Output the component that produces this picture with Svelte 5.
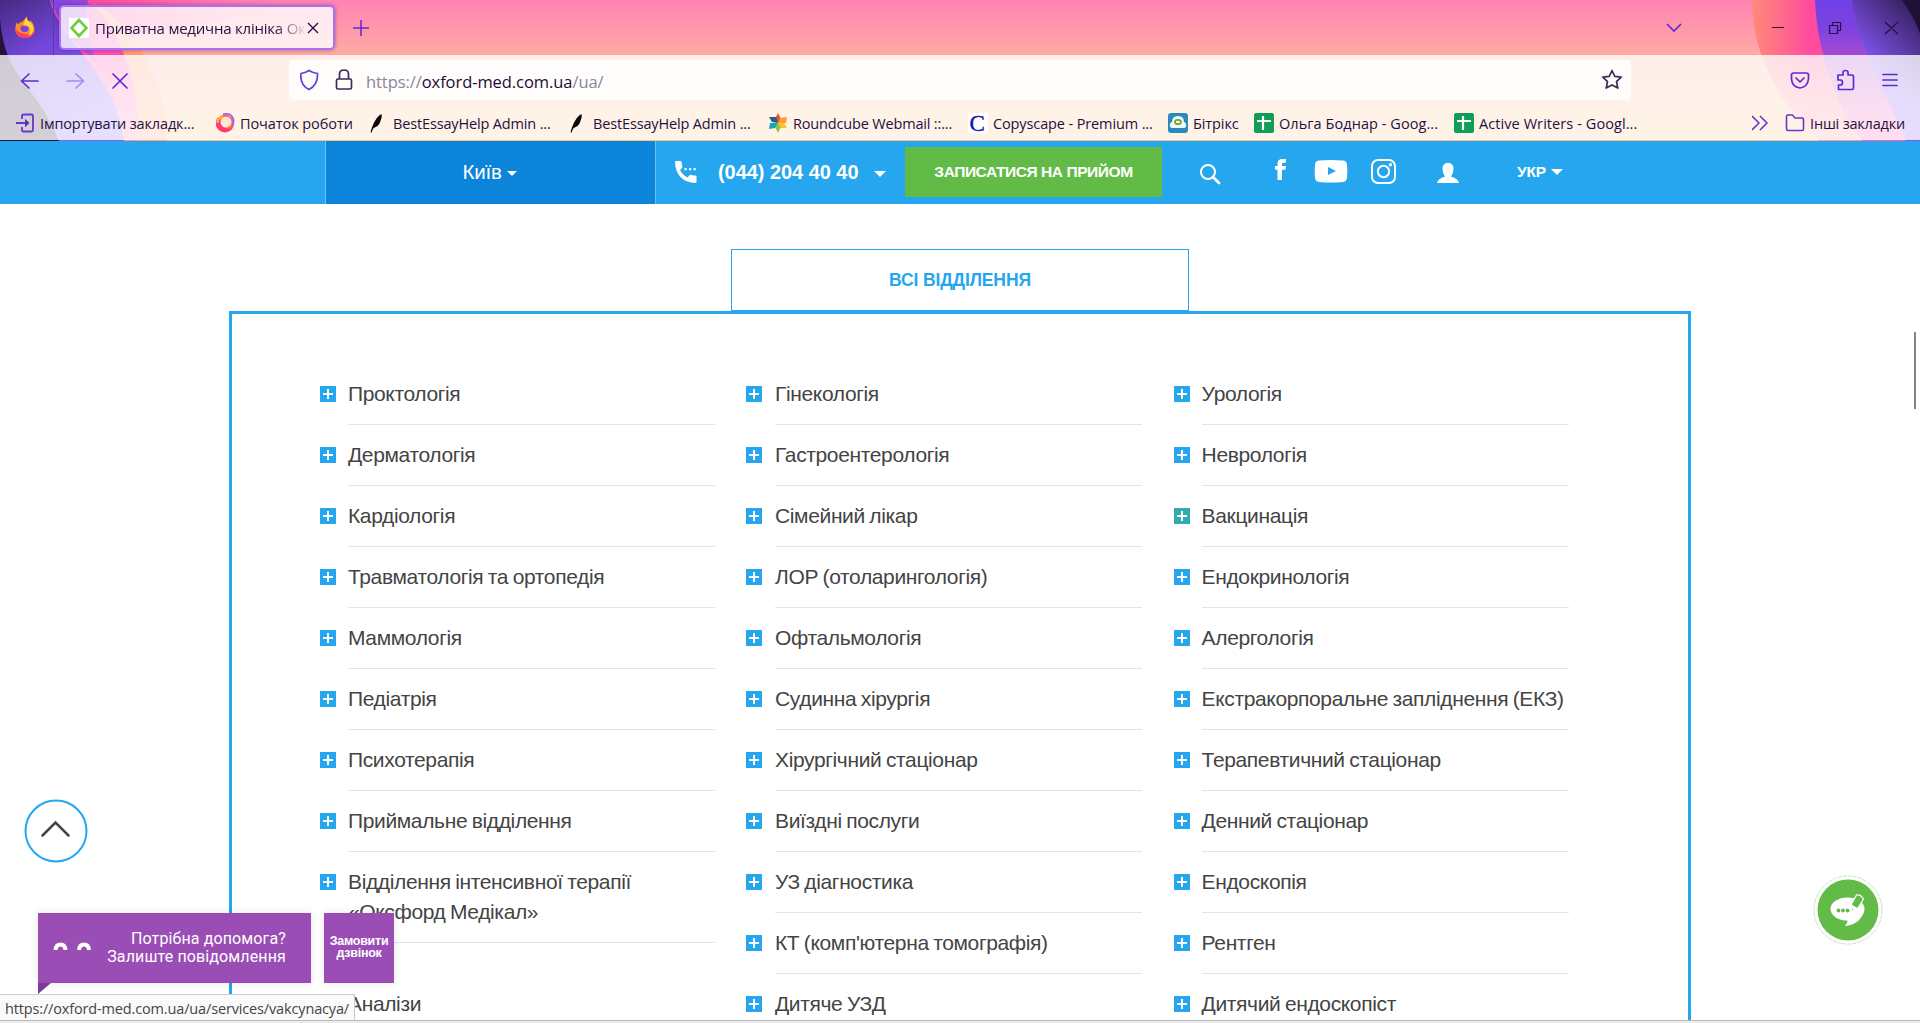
<script>
  // slot: full width of the bookmark, gap: icon to label, track: label tracking
  const bookmarks = [
    { label: 'Імпортувати закладк...', icon: 'import', slot: 199, gap: 4, track: -0.15 },
    { label: 'Початок роботи', icon: 'fox', slot: 153, gap: 5, track: -0.08 },
    { label: 'BestEssayHelp Admin ...', icon: 'feather', slot: 200, gap: 5, track: -0.15 },
    { label: 'BestEssayHelp Admin ...', icon: 'feather', slot: 200, gap: 5, track: -0.15 },
    { label: 'Roundcube Webmail ::...', icon: 'cube', slot: 200, gap: 5, track: -0.17 },
    { label: 'Copyscape - Premium ...', icon: 'copy', slot: 200, gap: 5, track: -0.12 },
    { label: 'Бітрікс', icon: 'bitrix', slot: 86, gap: 5, track: -0.1 },
    { label: 'Ольга Боднар - Goog...', icon: 'sheet', slot: 200, gap: 5, track: 0.06 },
    { label: 'Active Writers - Googl...', icon: 'sheet', slot: 200, gap: 5, track: 0.08 }
  ];
  const columns = [
    ['Проктологія', 'Дерматологія', 'Кардіологія', 'Травматологія та ортопедія', 'Маммологія', 'Педіатрія', 'Психотерапія', 'Приймальне відділення', 'Відділення інтенсивної терапії «Оксфорд Медікал»', 'Аналізи'],
    ['Гінекологія', 'Гастроентерологія', 'Сімейний лікар', 'ЛОР (отоларингологія)', 'Офтальмологія', 'Судинна хірургія', 'Хірургічний стаціонар', 'Виїздні послуги', 'УЗ діагностика', "КТ (комп'ютерна томографія)", 'Дитяче УЗД'],
    ['Урологія', 'Неврологія', 'Вакцинація', 'Ендокринологія', 'Алергологія', 'Екстракорпоральне запліднення (ЕКЗ)', 'Терапевтичний стаціонар', 'Денний стаціонар', 'Ендоскопія', 'Рентген', 'Дитячий ендоскопіст']
  ];
  const hovered = 'Вакцинація';
</script>

<div class="screen">
  <header class="browser">
    <svg class="theme" width="1920" height="141" viewBox="0 0 1920 141" aria-hidden="true">
      <defs>
        <linearGradient id="sky" x1="0" y1="0" x2="0" y2="1"><stop offset="0" stop-color="#ff84b4" /><stop offset=".39" stop-color="#ffaaa2" /><stop offset=".8" stop-color="#ffc08c" /></linearGradient>
        <linearGradient id="vio" x1="0" y1="0" x2=".5" y2="1"><stop offset="0" stop-color="#452a80" /><stop offset=".4" stop-color="#7446dc" /><stop offset="1" stop-color="#8a62f8" /></linearGradient>
        <linearGradient id="haze" gradientUnits="userSpaceOnUse" x1="50" y1="0" x2="90" y2="45"><stop offset="0" stop-color="#7d45e2" /><stop offset="1" stop-color="#c050cc" /></linearGradient>
        <linearGradient id="magenta" gradientUnits="userSpaceOnUse" x1="70" y1="0" x2="300" y2="0"><stop offset="0" stop-color="#ff46a4" /><stop offset=".3" stop-color="#ff5aa4" /><stop offset="1" stop-color="#ff84b0" stop-opacity="0" /></linearGradient>
        <linearGradient id="rose" x1="0" y1="0" x2="0" y2="1"><stop offset="0" stop-color="#ff4aa6" /><stop offset=".45" stop-color="#ff50b4" /><stop offset=".8" stop-color="#ff78b8" /><stop offset="1" stop-color="#ff90a0" /></linearGradient>
        <linearGradient id="orangeR" x1="0" y1="0" x2="1" y2="0"><stop offset="0" stop-color="#ff8a78" /><stop offset=".35" stop-color="#ff4b9e" /></linearGradient>
        <linearGradient id="orangeFade" x1="0" y1="0" x2="0" y2="1"><stop offset=".35" stop-color="#ffa080" stop-opacity="0" /><stop offset="1" stop-color="#ff9a90" /></linearGradient>
        <linearGradient id="vioR" x1="0" y1="0" x2="0" y2="1"><stop offset="0" stop-color="#6f40e8" /><stop offset=".2" stop-color="#7d42e0" /><stop offset=".39" stop-color="#a44bd4" /><stop offset=".9" stop-color="#ff62b0" /></linearGradient>
        <linearGradient id="darkR" gradientUnits="userSpaceOnUse" x1="1915" y1="10" x2="1865" y2="60"><stop offset="0" stop-color="#37215f" /><stop offset="1" stop-color="#8355f4" /></linearGradient>
      </defs>
      <rect width="1920" height="141" fill="url(#sky)" />
      <path d="M60 0H320C270 12 200 25 136 34L110 60Z" fill="url(#magenta)" />
      <path d="M88 0C130 20 166 75 167 141H100Z" fill="#ff9a72" opacity=".85" />
      <path d="M50 0H90C112 20 142 75 137 141H90Z" fill="url(#rose)" />
      <path d="M50 0H88Q84 24 96 62L88 55Q62 30 50 0Z" fill="url(#haze)" />
      <path d="M0 0H50C60 42 116 72 124 141H0Z" fill="url(#vio)" />
      <path d="M0 18C5 82 36 82 59 141H0Z" fill="#251238" />
      <path d="M1752 0C1752 50 1775 100 1820 141H1920V0Z" fill="url(#orangeR)" />
      <path d="M1752 0C1752 50 1775 100 1820 141H1920V0Z" fill="url(#orangeFade)" />
      <path d="M1815 0C1817 50 1835 105 1862 141H1920V0Z" fill="url(#vioR)" />
      <path d="M1852 0C1858 50 1890 100 1906 141H1920V0Z" fill="url(#darkR)" />
      <path d="M1902 0Q1915 18 1920 34V0Z" fill="#1f1038" />
    </svg>
    <div class="tabs">
      <div class="fx"><svg width="22" height="24" viewBox="0 0 22 24"><path d="M2.500 6.500 4 8q2-2 4.500-2.500Q11 3 12.500.5 12.500 4 16 6l.5-1.500Q21 9 20.500 14.500 19.500 21.500 11 22 2 21.500 1.300 14 1.200 10 2.500 6.500Z" fill="#ff8a26" /><path d="M1.300 13Q2 21.500 11 22q7-.3 9.300-6Q16 19 11 18 4 17 1.300 13Z" fill="#ff3d62" /><path d="M12.500.5Q12.500 4 16 6q4.500 4 3 9-1 4-5 5 4-5 1-9-3-2-6-2.500Q11 5 12.500.5Z" fill="#ffd53d" /><path d="M7.500 9.500q3 1 5.500.5 2.500 2 1 4.500-2 2.500-5.500 1-3.500-1.500-1-6Z" fill="#7542e5" /></svg></div>
      <div class="tab">
        <svg width="20" height="20" viewBox="0 0 20 20"><rect width="20" height="20" fill="#fff" /><path d="M10 2 17.500 10 10 18 2.500 10Z" fill="none" stroke="#6fce3c" stroke-width="2.600" /></svg>
        <span class="tabtext">Приватна медична клініка Окс</span>
        <svg width="12" height="12" viewBox="0 0 12 12"><path d="M1 1 11 11M11 1 1 11" stroke="#251040" stroke-width="1.400" /></svg>
      </div>
      <svg class="newtab" width="16" height="16" viewBox="0 0 16 16"><path d="M8 0V16M0 8H16" stroke="#5b2bd0" stroke-width="1.500" /></svg>
      <svg class="win" width="280" height="30" viewBox="1640 12 280 30" fill="none" stroke="#251040" stroke-width="1.200"><path d="m1667 23 7 7 7-7" stroke="#5b2bd0" stroke-width="1.600" /><path d="M1772 26.500h12M1829.500 24.500h8v8h-8zM1832.500 24v-2.500h8v8H1838M1885 21l13 12M1898 21l-13 12" /></svg>
    </div>
    <div class="nav">
      <svg class="arrows" width="289" height="40" viewBox="0 60 289 40" fill="none" stroke="#5b2bd0" stroke-width="1.700" stroke-linecap="round" stroke-linejoin="round"><path d="M38 81H22M29 74l-7.500 7 7.500 7" /><path d="M67 81H83M76 74l7.500 7-7.500 7" opacity=".45" /><path d="m113 74 14 14M127 74l-14 14" /></svg>
      <div class="url">
        <svg width="60" height="24" viewBox="0 0 60 24" fill="none" stroke-width="1.700"><path d="M9 2.500Q13 5 17.500 5.500C18 14 14 19 9 21.500 4 19 0 14 1 5.500Q5 5 9 2.500Z" stroke="#5545d8" /><path d="M38 11h12q1.500 0 1.500 1.500v7q0 1.500-1.500 1.500h-12q-1.500 0-1.500-1.500v-7q0-1.500 1.500-1.500ZM39.500 11V6q0-4 4.500-4T48.500 6v5" stroke="#3c2c58" /></svg>
        <span class="addr">https://<b>oxford-med.com.ua</b>/ua/</span>
        <svg class="star" width="22" height="22" viewBox="0 0 22 22"><path d="m11 1.500 2.800 5.900 6.400.8-4.700 4.400 1.300 6.500L11 15.900l-5.800 3.200 1.300-6.500L1.800 8.200l6.400-.8Z" fill="none" stroke="#3c2c58" stroke-width="1.700" stroke-linejoin="round" /></svg>
      </div>
      <svg class="tools" width="120" height="30" viewBox="1785 65 120 30" fill="none" stroke="#5b2bd0" stroke-width="1.700" stroke-linejoin="round" stroke-linecap="round"><path d="M1793.500 73h13q2 0 2 2v4q-1 8-8.500 9-8-1-8.500-9v-4q0-2 2-2ZM1796 78l4 4 4-4" /><path d="M1838 75h5v-2.500q0-2 2.500-2t2.500 2V75h4q1.500 0 1.500 1.500V88q0 1.500-1.500 1.500h-13.500V85h2q2 0 2-2.500t-2-2.500h-2.500Z" /><path d="M1883 74.500h14M1883 80h14M1883 85.500h14" /></svg>
    </div>
    <div class="bookmarks">
      {#each bookmarks as b}
        <div class="bm" style="width:{b.slot}px;gap:{b.gap}px;letter-spacing:{b.track}px">
          <svg width="20" height="20" viewBox="0 0 20 20">
            {#if b.icon === 'import'}<path d="M6 6V3q0-1.500 1.500-1.500h8Q17 1.500 17 3v14q0 1.500-1.500 1.500h-8Q6 18.500 6 17v-3M0 10h10" fill="none" stroke="#6a35c8" stroke-width="1.800" /><path d="M9 5.800 13.500 10 9 14.200Z" fill="#5b2bc8" />
            {:else if b.icon === 'fox'}<circle cx="10" cy="10.500" r="9" fill="#ff6644" /><path d="M2 5q-3 8 2 12c5 4 12 2 14-3-5 4-13 0-11-6Z" fill="#ff3c75" /><circle cx="11" cy="9" r="5.500" fill="#ffe6d2" /><path d="M8 1.200Q17-.5 18.500 7q.3 3-1 6" fill="none" stroke="#a45cff" stroke-width="1.800" /><path d="M8 3.500Q3 4 2.500 10" fill="none" stroke="#ffb03c" stroke-width="2.500" />
            {:else if b.icon === 'feather'}<path d="M2.500 19.500C5 10 9 3 13.500 1q1 3-1 7c-1 4-4 6-7 7l-2 4.500Z" fill="#080808" />
            {:else if b.icon === 'cube'}<path d="M10 0 13 6 10 10 7 6Z" fill="#f04a28" /><path d="m19 4-1 6-8 0 2-5Z" fill="#ff9a30" /><path d="m19 15-7 0-2-5 6 0Z" fill="#fbc52d" /><path d="m10 20-3-6 3-4 3 4Z" fill="#9bc34a" /><path d="m1 16 1-6 8 0-3 5Z" fill="#19a5b8" /><path d="m1 4 7 0 2 6-6-1Z" fill="#1c6584" />
            {:else if b.icon === 'copy'}<rect width="20" height="20" fill="#fff" /><text x="1.500" y="17.500" class="copyc">C</text>
            {:else if b.icon === 'bitrix'}<rect width="20" height="20" rx="3" fill="#2d89ba" /><path d="M4 15q-3-1-2-4 0-2 2-2 0-6 6-6t6 6q3 1 2 4 0 2-3 2Z" fill="#eef9ff" /><ellipse cx="10" cy="9" rx="3" ry="2.200" fill="#fff" stroke="#6da925" stroke-width="1.800" />
            {:else}<rect width="20" height="20" rx="2" fill="#109d58" /><path d="M9 3v14M3 8h14" stroke="#fff" stroke-width="2.200" />{/if}
          </svg>
          <span>{b.label}</span>
        </div>
      {/each}
      <div class="other">
        <svg width="54" height="20" viewBox="0 0 54 20" fill="none" stroke="#6a35c8" stroke-width="1.600" stroke-linejoin="round"><path d="m0 3 7 7-7 7M8 3l7 7-7 7M36 2h4.500l2.500 3h7q1.500 0 1.500 1.500V16q0 1.500-1.500 1.500h-14Q34.500 17.500 34.500 16V3.500Q34.500 2 36 2Z" /></svg>
        <span>Інші закладки</span>
      </div>
    </div>
  </header>

  <div class="sitebar">
    <div class="city">Київ <i class="caret small"></i></div>
    <div class="phone">
      <svg width="22" height="22" viewBox="0 0 22 22" fill="#fff"><path d="M1 0H5.500Q6.300 0 6.500 1q0 2.500 1 4.500.2.800-.3 1.200L5 9q2.500 5 7.500 7.500l2.300-2.500q.7-.6 1.400-.3 2 .8 4.300.9 1 .2 1 1V21q0 1-1 1Q1 21 0 1 0 0 1 0ZM9.500 7h2.200v2.200H9.500ZM14 7h2.200v2.200H14ZM18.500 7h2.200v2.200h-2.200Z" /></svg>
      <span>(044) 204 40 40</span><i class="caret"></i>
    </div>
    <div class="book">ЗАПИСАТИСЯ НА ПРИЙОМ</div>
    <svg class="social" width="270" height="40" viewBox="1195 152 270 40" fill="#fff">
      <circle cx="1208" cy="173" r="7" fill="none" stroke="#fff" stroke-width="2" /><path d="m1213 178 6 6" stroke="#fff" stroke-width="2.800" stroke-linecap="round" />
      <path d="M1277.500 181v-10.200H1275V167h2.500v-2.200q0-4.800 4.800-4.800h3.700v3.800h-2.500q-1.500 0-1.500 1.500v1.700h4l-.5 3.800H1282V181Z" />
      <path d="M1319 161.500q12-1 24 0 3.500.3 4 4 .7 6.500 0 13-.4 4-4 4.500-12 1-24 0-3.600-.5-4-4.500-.7-6.500 0-13 .5-3.700 4-4ZM1328 168v8l8-4Z" fill-rule="evenodd" />
      <g fill="none" stroke="#fff" stroke-width="2"><rect x="1372" y="161" width="23" height="23" rx="6" /><circle cx="1383.500" cy="172.500" r="5.700" /></g><circle cx="1390.500" cy="165.700" r="1.700" />
      <path d="M1437 184q.7-4.500 8-6.500-2.500-3.500-2.500-8 0-5.500 5.500-5.500t5.500 5.500q0 4.500-2.500 8 7.300 2 8 6.500Z" />
    </svg>
    <div class="lang">УКР <i class="caret"></i></div>
  </div>

  <main>
    <div class="all">ВСІ ВІДДІЛЕННЯ</div>
    <section class="panel">
      {#each columns as col}
        <ul>
          {#each col as item}
            <li><span class="plus" class:hot={item === hovered}></span><span class="name">{item}</span></li>
          {/each}
        </ul>
      {/each}
    </section>
  </main>
  <div class="scroll"></div>
  <svg class="up" width="64" height="64" viewBox="0 0 64 64" fill="none"><circle cx="32" cy="32" r="30.500" fill="#fff" stroke="#25a6ee" stroke-width="2" /><path d="m18.500 36.500 13-13 13 13" stroke="#444" stroke-width="2.500" stroke-linecap="round" /></svg>
  <div class="help">
    <svg width="40" height="8" viewBox="0 0 40 8" fill="none" stroke="#fff" stroke-width="4"><path d="M3.500 8Q4 2.500 8.500 2.500T13.500 8M27 8q.5-5.500 5-5.500T37 8" /></svg>
    <div>Потрібна допомога?<br />Залиште повідомлення</div>
  </div>
  <div class="call">Замовити<br />дзвінок</div>
  <svg class="chat" width="70" height="70" viewBox="0 0 70 70"><circle cx="35" cy="35" r="34" fill="#fff" stroke="#c4e6bd" stroke-width="1" stroke-dasharray="4 1" /><circle cx="35" cy="35" r="30.500" fill="#62bb47" /><ellipse cx="34.500" cy="34" rx="17" ry="11.500" fill="#fff" /><path d="M51 37Q46 50 32 51q3-3 2.500-6Z" fill="#fff" /><g fill="#62bb47"><circle cx="25.500" cy="35.500" r="1.900" /><circle cx="30" cy="35.500" r="1.900" /><circle cx="34.500" cy="35.500" r="1.900" /></g><path d="m38.500 29 5-9q4-1 7 4l-5.500 9-6.500 3Z" fill="#62bb47" stroke="#fff" stroke-width="1.200" /><path d="m38.500 29.500 6 3.500-3.500 2-2.500-2Z" fill="#fff" /></svg>
  <div class="status">https://oxford-med.com.ua/ua/services/vakcynacya/</div>
  <div class="bottom"></div>
</div>

<style>
  :global(body) { margin: 0; overflow: hidden; }
  .screen { position: relative; width: 1920px; height: 1023px; overflow: hidden; background: #fff; font-family: "Liberation Sans", Arial, sans-serif; white-space: nowrap; }
  .screen * { box-sizing: border-box; }
  svg { flex: none; display: block; }
  .browser { position: relative; height: 141px; border-bottom: 1px solid #b98f88; font-family: "Open Sans", "Noto Sans", sans-serif; color: #251040; }
  .theme { position: absolute; inset: 0; }
  .tabs { position: relative; height: 55px; display: flex; align-items: center; }
  .fx { width: 54px; height: 55px; padding: 16px 0 0 14px; border-right: 1px solid #5a35b0; }
  .tab { width: 276px; height: 45px; margin-left: 5px; border: 2px solid #a871f5; border-radius: 5px; background: rgba(255,255,255,.8); box-shadow: 0 0 4px rgba(60,0,80,.4); display: flex; align-items: center; padding: 0 11px 0 8px; }
  .tabtext { width: 212px; margin-left: 6px; overflow: hidden; font-size: 15px; letter-spacing: -.22px; mask-image: linear-gradient(90deg, #000 85%, transparent); }
  .newtab { margin-left: 18px; }
  .win { margin-left: auto; }
  .nav { position: relative; height: 49px; padding-top: 5px; display: flex; background: linear-gradient(rgba(255,255,255,.78), rgba(255,255,255,.8)); }
  .url { width: 1342px; height: 40px; border-radius: 5px; background: rgba(255,255,255,.85); display: flex; align-items: center; padding: 0 8px 0 11px; }
  .addr { margin-left: 6px; padding-top: 2px; font-size: 16.500px; color: #8a8497; letter-spacing: -.07px; }
  .addr b { font-weight: 400; color: #1c0b33; }
  .star { margin-left: auto; }
  .tools { margin: 5px 0 0 154px; }
  .bookmarks { position: relative; height: 36px; display: flex; align-items: center; padding: 2px 0 0 16px; background: rgba(255,255,255,.8); font-size: 14.500px; letter-spacing: -.2px; }
  .bm { flex: none; display: flex; align-items: center; }
  .copyc { font: 23px "Liberation Serif", serif; fill: #1818a0; stroke: #1818a0; stroke-width: .4; }
  .other { margin-left: auto; margin-right: 15px; display: flex; align-items: center; gap: 4px; }
  .sitebar { height: 63px; background: #25a6ee; color: #fff; display: flex; align-items: center; padding-left: 325px; }
  .city { width: 331px; height: 63px; background: #0b84da; border: solid #68c1f4; border-width: 0 1px; display: flex; align-items: center; justify-content: center; gap: 5px; padding: 0 2px 2px 0; font-size: 20.500px; letter-spacing: -.2px; }
  .caret { border: 6px solid transparent; border-top-color: #fff; border-bottom: 0; margin-top: 3px; }
  .small { border-width: 5px 5px 0; }
  .phone { width: 249px; display: flex; align-items: center; padding-left: 19px; padding-bottom: 1px; font-size: 20px; letter-spacing: -.05px; font-weight: 700; }
  .phone span { margin: 0 16px 0 21px; }
  .book { width: 257px; height: 50px; margin-bottom: 1px; background: #62bb47; display: flex; align-items: center; justify-content: center; font-size: 15.500px; font-weight: 700; letter-spacing: -.43px; }
  .social { margin-left: 33px; margin-bottom: 3px; }
  .lang { margin-left: 52px; margin-bottom: 1px; display: flex; align-items: center; gap: 5px; font-size: 15.500px; letter-spacing: -.2px; font-weight: 700; }
  .lang .caret { margin-top: 0; }
  main { padding: 45px 229px 0; height: 816px; display: flex; flex-direction: column; align-items: center; }
  .all { flex: none; width: 458px; height: 62px; border: 1px solid #25a6ee; display: flex; align-items: center; justify-content: center; color: #25a6ee; font-size: 17.500px; font-weight: 700; letter-spacing: -.12px; }
  .panel { width: 1462px; flex: 1; border: 3px solid #25a6ee; border-bottom: 0; padding: 50px 0 0 88px; display: flex; gap: 31px; overflow: hidden; }
  ul { list-style: none; margin: 0; padding: 0; width: 395px; flex: none; }
  ul:nth-child(2) { width: 396.600px; }
  li { display: flex; gap: 12px; min-height: 61px; }
  ul:nth-child(2) li { gap: 13px; }
  ul:first-child li:last-child { margin-top: 31px; }
  .plus { flex: none; width: 16px; height: 16px; margin-top: 22px; background: linear-gradient(#fff,#fff) center/10px 2px no-repeat, linear-gradient(#fff,#fff) center/2px 10px no-repeat, #25a6ee; }
  .plus.hot { background-color: #35a9b0; }
  .name { width: 367px; padding: 15px 60px 15px 0; border-bottom: 1px solid #e5e5e5; color: #444; font-size: 21px; line-height: 30px; letter-spacing: -.36px; word-spacing: -1px; white-space: normal; }
  ul:not(:first-child) .name { white-space: nowrap; padding-right: 0; }
  .scroll { position: absolute; left: 1914px; top: 332px; width: 2px; height: 77px; background: #858585; }
  .up { position: absolute; left: 24px; top: 799px; }
  .help { position: absolute; left: 38px; top: 913px; width: 273px; height: 70px; background: #9a4db5; color: #fff; display: flex; align-items: center; justify-content: space-between; padding: 0 25px 0 14px; text-align: right; font: 16px/18px Roboto, sans-serif; letter-spacing: .13px; box-shadow: 0 0 8px rgba(0,0,0,.1); }
  .help svg { margin-bottom: 5px; }
  .help::after { content: ""; position: absolute; left: 0; top: 70px; width: 13px; height: 11px; background: #7e3b98; clip-path: polygon(0 0, 100% 0, 0 100%); }
  .call { position: absolute; left: 324px; top: 913px; width: 70px; height: 70px; background: #9a4db5; color: #fff; display: flex; align-items: center; justify-content: center; padding-bottom: 2px; text-align: center; font-size: 12.500px; font-weight: 700; letter-spacing: -.25px; line-height: 12px; box-shadow: 0 0 8px rgba(0,0,0,.1); }
  .chat { position: absolute; left: 1813px; top: 875px; }
  .status { position: absolute; left: 0; top: 994px; width: 355px; height: 26px; background: #fafafa; border: solid #ccc; border-width: 1px 1px 0 0; padding-left: 5px; color: #444; font: 14.500px/27px "Open Sans", sans-serif; letter-spacing: -.15px; }
  .bottom { position: absolute; left: 0; top: 1020px; width: 100%; height: 3px; background: #ececec; border-top: 1px solid #bbb; }
</style>
